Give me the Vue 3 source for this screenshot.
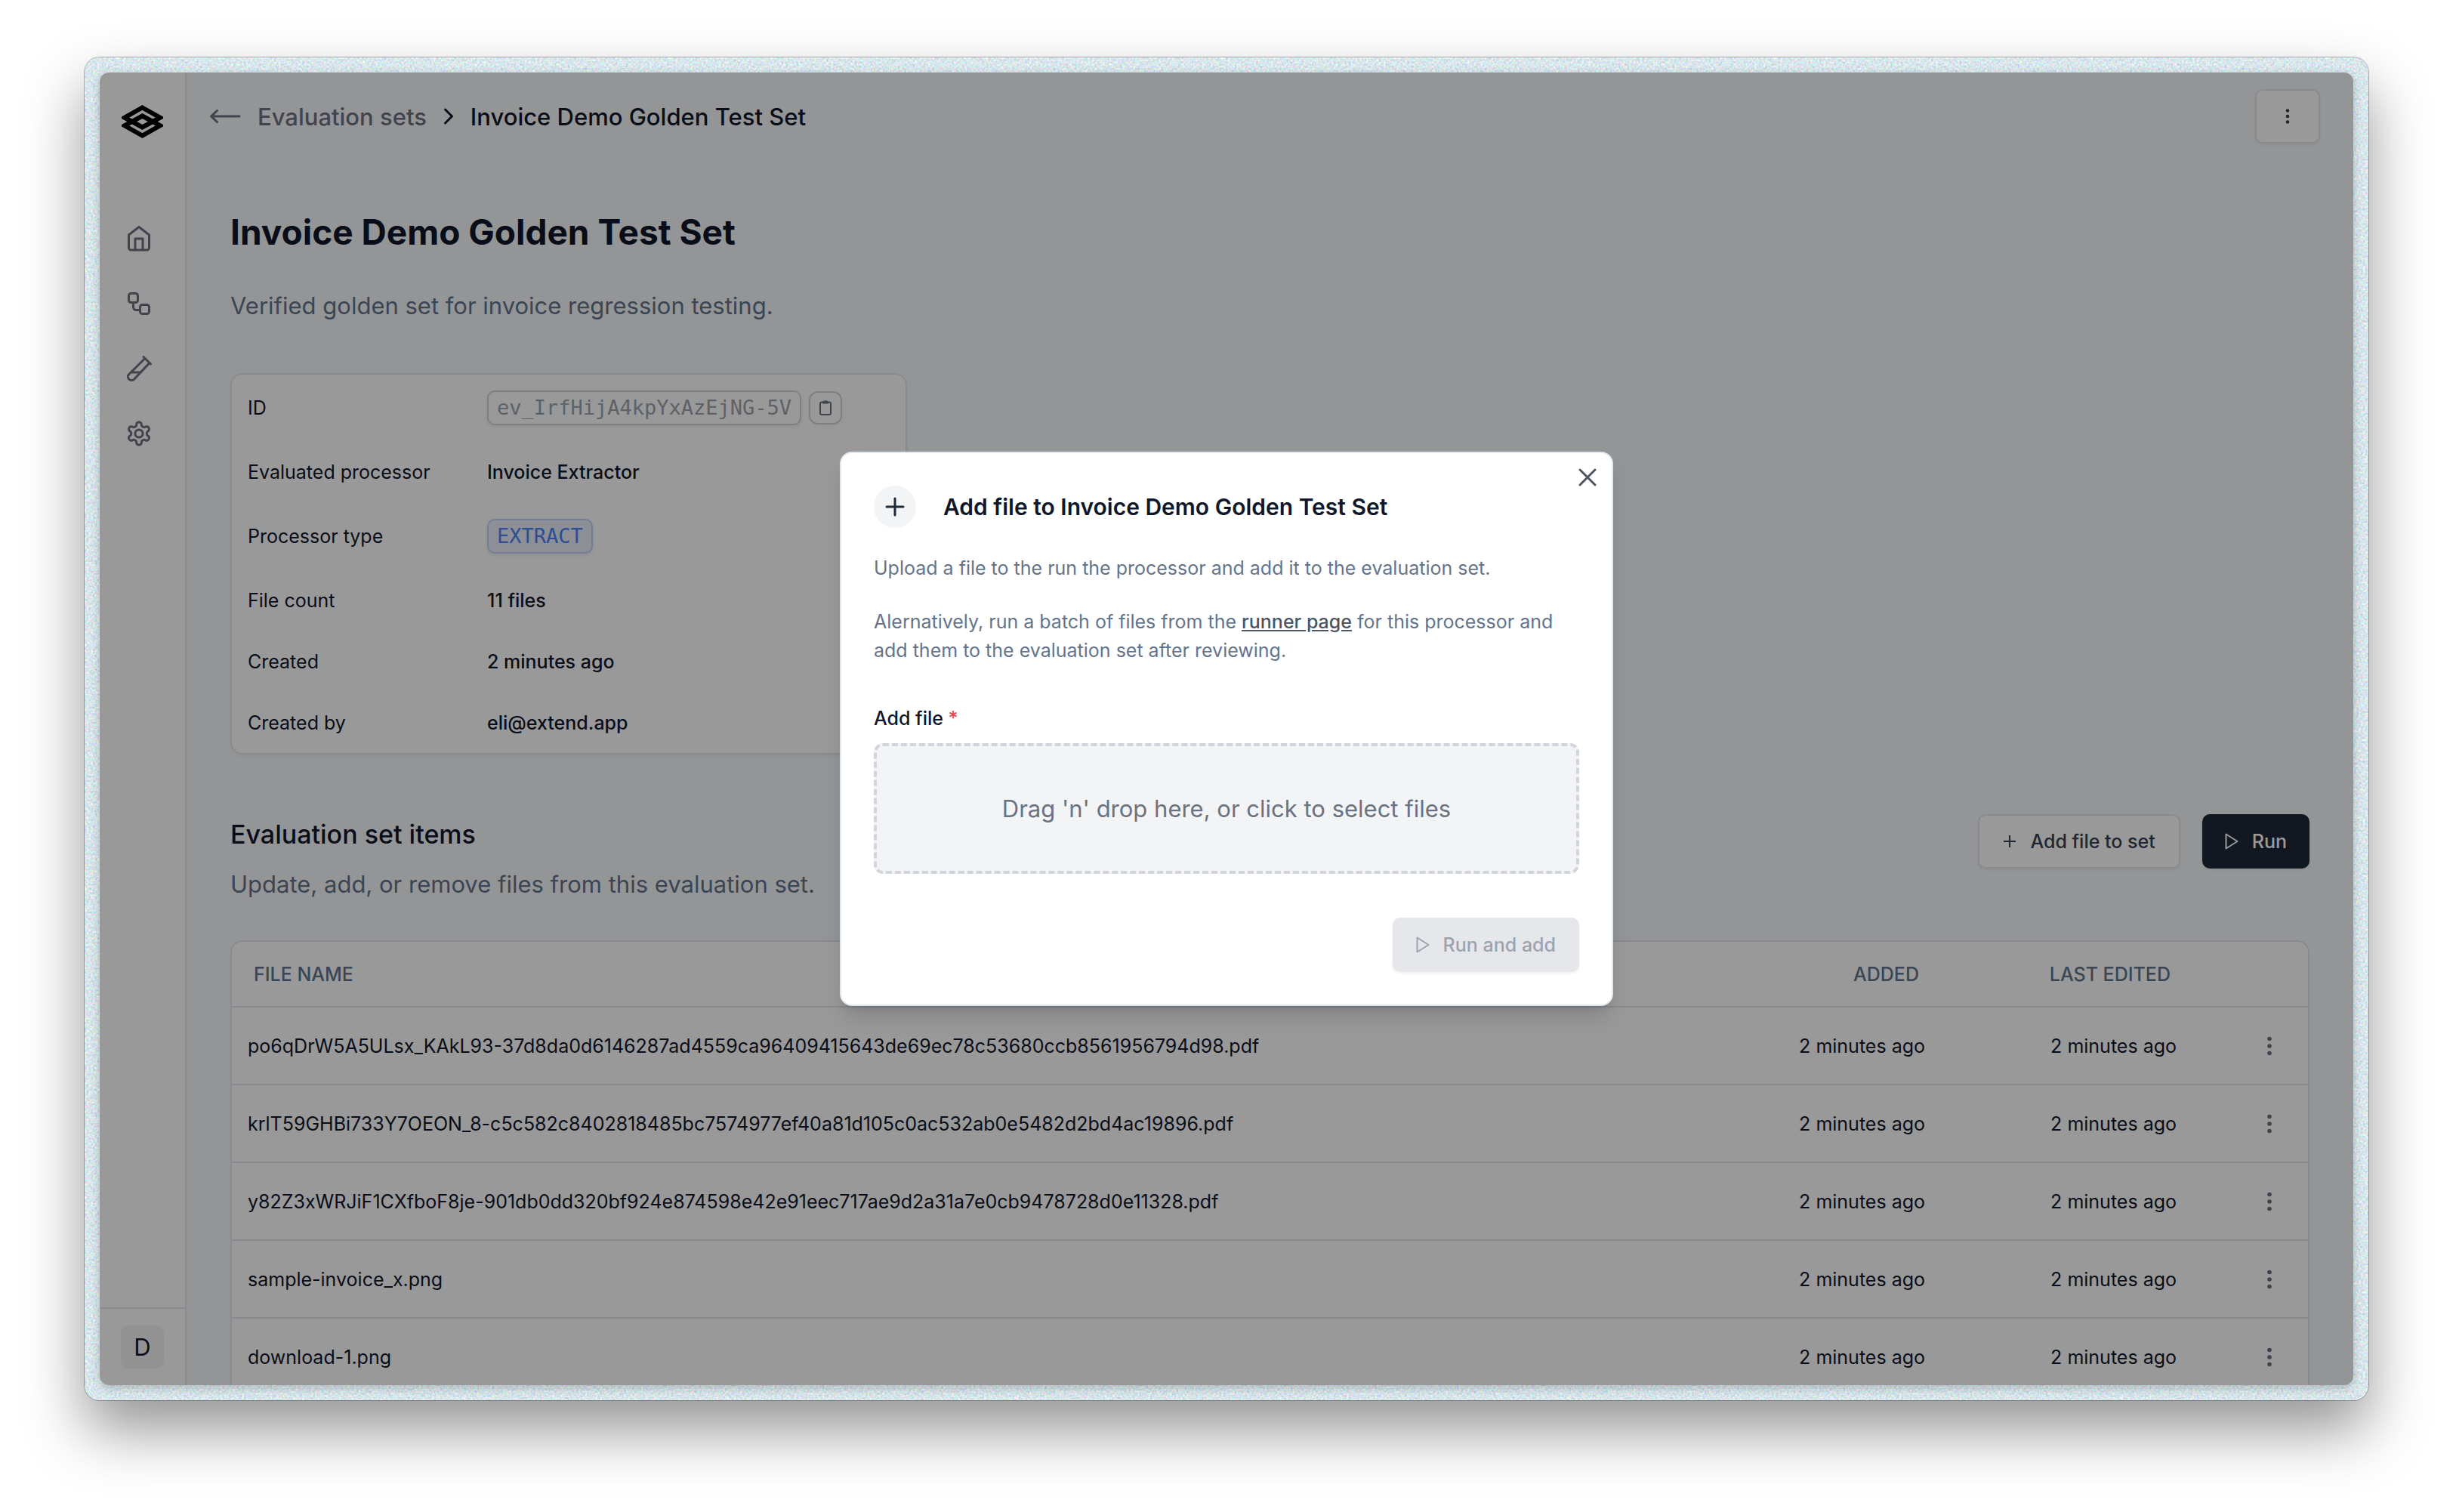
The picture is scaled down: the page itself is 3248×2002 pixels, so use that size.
<script setup>
import { ref } from 'vue'

const title = 'Invoice Demo Golden Test Set'

const details = [
  { label: 'ID', value: 'ev_IrfHijA4kpYxAzEjNG-5V', kind: 'id' },
  { label: 'Evaluated processor', value: 'Invoice Extractor', kind: 'text' },
  { label: 'Processor type', value: 'EXTRACT', kind: 'type' },
  { label: 'File count', value: '11 files', kind: 'text' },
  { label: 'Created', value: '2 minutes ago', kind: 'text' },
  { label: 'Created by', value: 'eli@extend.app', kind: 'text' },
]

const files = ref([
  'po6qDrW5A5ULsx_KAkL93-37d8da0d6146287ad4559ca96409415643de69ec78c53680ccb8561956794d98.pdf',
  'krlT59GHBi733Y7OEON_8-c5c582c8402818485bc7574977ef40a81d105c0ac532ab0e5482d2bd4ac19896.pdf',
  'y82Z3xWRJiF1CXfboF8je-901db0dd320bf924e874598e42e91eec717ae9d2a31a7e0cb9478728d0e11328.pdf',
  'sample-invoice_x.png',
  'download-1.png',
])
</script>

<template>
  <div class="stage">
    <div class="frame">
      <svg class="grain" aria-hidden="true">
        <filter id="grain" x="0" y="0" width="100%" height="100%" color-interpolation-filters="sRGB">
          <feTurbulence type="fractalNoise" baseFrequency="0.35" numOctaves="2" seed="4" />
          <feColorMatrix values="0.5 0 0 0 0.6  0 0.35 0 0 0.73  0 0 0.35 0 0.75  0 0 0 0 1" />
        </filter>
        <rect width="100%" height="100%" filter="url(#grain)" />
      </svg>

      <div class="window">
        <aside class="sidebar">
          <a href="#" class="logo" aria-label="Extend">
            <svg width="55" height="44" viewBox="0 0 55 44" fill="none" stroke="#000" stroke-width="6">
              <path d="M27.5 3.5 51 16.7 27.5 29.5 4 16.7Z" />
              <path d="M27.5 14.5 51 27.3 27.5 40.5 4 27.3Z" />
            </svg>
          </a>
          <nav class="nav" aria-label="Main">
            <a href="#" aria-label="Home">
              <svg width="36" height="36" viewBox="0 0 36 36" class="line">
                <path d="M4.5 13 18 2.5 31.5 13V30a3 3 0 0 1-3 3h-21a3 3 0 0 1-3-3Z" />
                <path d="M13 33V18h10v15" />
              </svg>
            </a>
            <a href="#" aria-label="Workflows">
              <svg width="36" height="36" viewBox="0 0 36 36" class="line">
                <rect x="4.5" y="4.5" width="12" height="12" rx="3" />
                <rect x="19.5" y="19.5" width="12" height="12" rx="3" />
                <path d="M10.5 16.5v6a4 4 0 0 0 4 4h5" />
              </svg>
            </a>
            <a href="#" aria-label="Evaluation">
              <svg width="36" height="36" viewBox="0 0 36 36" class="line">
                <path d="m24 2.5 9.5 9.500M26 4.500 4.800 25.500a4.700 4.700 0 0 0 6.700 6.700L31.800 10.600M7.500 23h13" />
              </svg>
            </a>
            <a href="#" aria-label="Settings">
              <svg width="36" height="36" viewBox="0 0 24 24" class="line gear">
                <path d="M12.22 2h-.44a2 2 0 0 0-2 2v.18a2 2 0 0 1-1 1.73l-.43.25a2 2 0 0 1-2 0l-.15-.08a2 2 0 0 0-2.73.73l-.22.38a2 2 0 0 0 .73 2.73l.15.1a2 2 0 0 1 1 1.72v.51a2 2 0 0 1-1 1.74l-.15.09a2 2 0 0 0-.73 2.73l.22.38a2 2 0 0 0 2.73.73l.15-.08a2 2 0 0 1 2 0l.43.25a2 2 0 0 1 1 1.73V20a2 2 0 0 0 2 2h.44a2 2 0 0 0 2-2v-.18a2 2 0 0 1 1-1.73l.43-.25a2 2 0 0 1 2 0l.15.08a2 2 0 0 0 2.73-.73l.22-.39a2 2 0 0 0-.73-2.73l-.15-.08a2 2 0 0 1-1-1.74v-.5a2 2 0 0 1 1-1.74l.15-.09a2 2 0 0 0 .73-2.73l-.22-.38a2 2 0 0 0-2.73-.73l-.15.08a2 2 0 0 1-2 0l-.43-.25a2 2 0 0 1-1-1.73V4a2 2 0 0 0-2-2z" />
                <circle cx="12" cy="12" r="3.4" />
              </svg>
            </a>
          </nav>
          <div class="account">
            <button type="button" class="avatar">D</button>
          </div>
        </aside>

        <main class="main">
          <header class="topbar">
            <nav class="crumbs" aria-label="Breadcrumb">
              <a href="#" class="crumb-back">
                <svg width="42" height="22" viewBox="0 0 42 22" class="line">
                  <path d="M40 11H3M10.5 3.5 2.5 11l8 7.5" />
                </svg>
                <span>Evaluation sets</span>
              </a>
              <svg width="14" height="24" viewBox="0 0 14 24" class="chevron">
                <path d="m2.5 3 9 9-9 9" />
              </svg>
              <span class="crumb-current">{{ title }}</span>
            </nav>
            <button type="button" class="button light more" aria-label="More options">
              <svg width="6" height="20" viewBox="0 0 6 20" fill="currentColor">
                <circle cx="3" cy="2.5" r="2.3" /><circle cx="3" cy="10" r="2.3" /><circle cx="3" cy="17.5" r="2.3" />
              </svg>
            </button>
          </header>

          <div class="content">
            <h1>{{ title }}</h1>
            <p class="subtitle">Verified golden set for invoice regression testing.</p>

            <dl class="details">
              <template v-for="d in details" :key="d.label">
                <dt>{{ d.label }}</dt>
                <dd v-if="d.kind === 'id'" class="tall">
                  <code class="pill">{{ d.value }}</code>
                  <button type="button" class="copy" aria-label="Copy ID">
                    <svg width="16" height="20" viewBox="0 0 16 20">
                      <rect x="1" y="2.5" width="14" height="16.5" rx="2" />
                      <path d="M5 3.5c0-3 6-3 6 0Z" />
                    </svg>
                  </button>
                </dd>
                <dd v-else-if="d.kind === 'type'" class="tall">
                  <code class="pill blue">{{ d.value }}</code>
                </dd>
                <dd v-else>{{ d.value }}</dd>
              </template>
            </dl>

            <section>
              <div class="section-head">
                <div>
                  <h2>Evaluation set items</h2>
                  <p class="subtitle">Update, add, or remove files from this evaluation set.</p>
                </div>
                <div class="actions">
                  <button type="button" class="button light">
                    <svg width="18" height="18" viewBox="0 0 18 18" class="glyph"><path d="M9 1v16M1 9h16" /></svg>
                    Add file to set
                  </button>
                  <button type="button" class="button dark">
                    <svg width="18" height="22" viewBox="0 0 18 22" class="glyph"><path d="M1.5 1.5v19l15-9.5Z" /></svg>
                    Run
                  </button>
                </div>
              </div>

              <div class="table-card">
                <table>
                  <thead>
                    <tr>
                      <th scope="col">File name</th>
                      <th scope="col" class="when">Added</th>
                      <th scope="col" class="when edited">Last edited</th>
                      <th class="menu"></th>
                    </tr>
                  </thead>
                  <tbody>
                    <tr v-for="f in files" :key="f">
                      <td>{{ f }}</td>
                      <td class="when">2 minutes ago</td>
                      <td class="when edited">2 minutes ago</td>
                      <td class="menu">
                        <button type="button" class="row-menu" aria-label="Row actions">
                          <svg width="6" height="26" viewBox="0 0 6 26" fill="currentColor">
                            <circle cx="3" cy="3.5" r="2.8" /><circle cx="3" cy="13" r="2.8" /><circle cx="3" cy="22.5" r="2.8" />
                          </svg>
                        </button>
                      </td>
                    </tr>
                  </tbody>
                </table>
              </div>
            </section>
          </div>
        </main>

        <div class="overlay">
          <form class="modal" role="dialog" aria-labelledby="dialog-title" @submit.prevent>
            <button type="button" class="close" aria-label="Close">
              <svg width="24" height="24" viewBox="0 0 24 24"><path d="m2 2 20 20M22 2 2 22" /></svg>
            </button>
            <div class="modal-head">
              <span class="badge">
                <svg width="28" height="28" viewBox="0 0 28 28"><path d="M14 3v22M3 14h22" /></svg>
              </span>
              <h3 id="dialog-title">Add file to {{ title }}</h3>
            </div>
            <div class="copy-text">
              <p>Upload a file to the run the processor and add it to the evaluation set.</p>
              <p>
                Alernatively, run a batch of files from the <a href="#">runner page</a> for this
                processor and add them to the evaluation set after reviewing.
              </p>
            </div>
            <label class="field-label" for="file">Add file <span class="required">*</span></label>
            <label class="dropzone" for="file">Drag 'n' drop here, or click to select files</label>
            <input id="file" type="file" class="file-input" />
            <div class="modal-foot">
              <button type="submit" class="button muted" disabled>
                <svg width="18" height="22" viewBox="0 0 18 22" class="glyph"><path d="M1.5 1.5v19l15-9.5Z" /></svg>
                Run and add
              </button>
            </div>
          </form>
        </div>
      </div>
    </div>
  </div>
</template>

<style>
body {
  background: #fff;
}
</style>

<style scoped>
* {
  box-sizing: border-box;
  margin: 0;
}

.stage {
  display: flex;
  height: 100vh;
  padding: 76px 112px 148px;
  overflow: hidden;
  font-family: Inter, "Liberation Sans", sans-serif;
  font-size: 25px;
  color: #0f172a;
}

svg {
  display: block;
  flex: none;
}

button {
  font: inherit;
  color: inherit;
}

a {
  color: inherit;
  text-decoration: none;
}

.frame {
  position: relative;
  display: flex;
  flex: 1;
  min-width: 0;
  padding: 20px;
  border-radius: 20px;
  background: #d9e5e9;
  box-shadow: 0 0 0 1px rgba(0, 0, 0, 0.28), 0 40px 80px rgba(0, 0, 0, 0.42);
}

.grain {
  position: absolute;
  inset: 0;
  width: 100%;
  height: 100%;
  border-radius: 20px;
}

.window {
  position: relative;
  display: flex;
  flex: 1;
  min-width: 0;
  overflow: hidden;
  border-radius: 12px;
  background: #f7f9fb;
  box-shadow: 0 4px 14px rgba(0, 0, 0, 0.22);
}

/* Sidebar */

.sidebar {
  display: flex;
  flex: none;
  flex-direction: column;
  width: 115px;
  border-right: 2px solid #e5e7eb;
  background: #fff;
}

.logo {
  padding: 43px 29px 0;
}

.nav {
  display: flex;
  flex-direction: column;
  gap: 50px;
  padding: 115px 34px 0;
  color: #6f7180;
}

.line {
  fill: none;
  stroke: currentColor;
  stroke-width: 3;
  stroke-linecap: round;
  stroke-linejoin: round;
}

.gear {
  stroke-width: 2;
}

.account {
  display: flex;
  justify-content: center;
  margin-top: auto;
  padding: 22px 0;
  border-top: 2px solid #e5e7eb;
}

.avatar {
  width: 57px;
  height: 57px;
  padding: 0;
  border: 0;
  border-radius: 10px;
  background: #f3f4f6;
  font-size: 31px;
}

/* Page */

.main {
  flex: 1;
  min-width: 0;
}

.topbar {
  display: flex;
  align-items: center;
  justify-content: space-between;
  height: 116px;
  padding: 0 44px 0 30px;
}

.crumbs,
.crumb-back {
  display: flex;
  align-items: center;
}

.crumbs {
  gap: 22px;
  font-size: 31px;
  font-weight: 500;
}

.crumb-back {
  gap: 22px;
  color: #6f7180;
}

.chevron {
  fill: none;
  stroke: currentColor;
  stroke-width: 3;
  stroke-linecap: round;
  stroke-linejoin: round;
}

.content {
  padding: 65px 58px 0;
}

h1 {
  margin-bottom: 46px;
  font-size: 46px;
  font-weight: 700;
  line-height: 60px;
}

.subtitle {
  font-size: 31px;
  line-height: 44px;
  color: #64748b;
}

.details {
  display: grid;
  grid-template-columns: 317px 1fr;
  align-items: center;
  row-gap: 41px;
  width: 896px;
  margin: 67px 0 79px;
  padding: 20px 21px;
  border: 2px solid #e5e7eb;
  border-radius: 16px;
  background: #fff;
  box-shadow: 0 2px 4px rgba(0, 0, 0, 0.05);
  line-height: 40px;
}

dd {
  font-weight: 500;
}

.tall {
  display: flex;
  align-items: center;
  gap: 10px;
  height: 48px;
}

.pill {
  padding: 0 11px;
  border: 2px solid #d1d5db;
  border-radius: 10px;
  box-shadow: 0 2px 4px rgba(0, 0, 0, 0.08);
  font-family: "DejaVu Sans Mono", monospace;
  font-size: 27px;
  font-weight: 400;
  line-height: 42px;
  color: #9ca3af;
}

.pill.blue {
  border-color: #bfd3fe;
  background: #eaf0fa;
  color: #4b82f6;
}

.copy {
  display: grid;
  place-items: center;
  width: 44px;
  height: 44px;
  padding: 0;
  border: 2px solid #d1d5db;
  border-radius: 12px;
  background: #fff;
  box-shadow: 0 2px 4px rgba(0, 0, 0, 0.05);
}

.copy svg {
  fill: none;
  stroke: #6b7280;
  stroke-width: 2;
}

.section-head {
  display: flex;
  align-items: flex-start;
  justify-content: space-between;
  margin-bottom: 52px;
}

h2 {
  margin-bottom: 17px;
  font-size: 34px;
  font-weight: 500;
  line-height: 54px;
}

.actions {
  display: flex;
  gap: 29px;
}

.button {
  display: flex;
  align-items: center;
  justify-content: center;
  gap: 18px;
  height: 72px;
  padding: 0 28px;
  border: 2px solid transparent;
  border-radius: 10px;
  box-shadow: 0 2px 4px rgba(0, 0, 0, 0.06);
  font-weight: 500;
}

.button.light {
  padding: 0 31px;
  border-color: #e5e7eb;
  background: #fff;
  color: #374151;
}

.button.dark {
  background: #1f2937;
  color: #fff;
}

.button.muted {
  padding: 0 29px;
  background: #e5e7eb;
  color: #9ca3af;
}

.button.more {
  width: 86px;
  padding: 0;
}

.glyph {
  fill: none;
  stroke: currentColor;
  stroke-width: 2;
  stroke-linejoin: round;
}

.table-card {
  border: 2px solid #e5e7eb;
  border-radius: 16px;
  background: #fff;
}

table {
  width: 100%;
  border-spacing: 0;
}

th,
td {
  padding: 0 21px;
  border-bottom: 2px solid #e2e8f0;
  text-align: left;
  white-space: nowrap;
}

th {
  height: 87px;
  padding: 0 29px;
  font-weight: 500;
  color: #64748b;
  text-transform: uppercase;
}

td {
  height: 103px;
}

.when {
  width: 280px;
  text-align: right;
}

.edited {
  width: 333px;
}

.menu {
  width: 153px;
  padding: 0 48px;
}

.row-menu {
  display: block;
  margin-left: auto;
  padding: 0;
  border: 0;
  background: none;
  color: #6b7280;
}

/* Dialog */

.overlay {
  position: absolute;
  inset: 0;
  display: flex;
  align-items: center;
  justify-content: center;
  background: rgba(0, 0, 0, 0.4);
}

.modal {
  position: relative;
  width: 1024px;
  padding: 43px;
  border: 2px solid #e2e8f0;
  border-radius: 16px;
  background: #fff;
  box-shadow: 0 20px 30px -6px rgba(0, 0, 0, 0.14), 0 8px 12px -8px rgba(0, 0, 0, 0.14);
}

.close {
  position: absolute;
  top: 20px;
  right: 20px;
  padding: 0;
  border: 0;
  background: none;
  color: #4b5563;
}

.close svg,
.badge svg {
  fill: none;
  stroke: currentColor;
  stroke-width: 3;
  stroke-linecap: round;
}

.modal-head {
  display: flex;
  align-items: center;
  gap: 36px;
}

.badge {
  display: grid;
  place-items: center;
  width: 56px;
  height: 56px;
  border-radius: 50%;
  background: #f3f4f6;
  color: #1f2937;
}

h3 {
  font-size: 30px;
  font-weight: 600;
}

.copy-text {
  display: grid;
  gap: 33px;
  margin: 34px 0 54px;
  line-height: 38px;
  color: #64748b;
}

.copy-text a {
  font-weight: 500;
  color: #4b5563;
  text-decoration: underline;
}

.field-label {
  display: block;
  margin-bottom: 16px;
  font-weight: 500;
  line-height: 34px;
}

.required {
  color: #ef4444;
}

.dropzone {
  display: grid;
  place-items: center;
  height: 173px;
  border: 4px dashed #d1d5db;
  border-radius: 12px;
  background: #f3f4f6;
  font-size: 31px;
  color: #6b7280;
}

.file-input {
  position: absolute;
  width: 1px;
  height: 1px;
  overflow: hidden;
  opacity: 0;
}

.modal-foot {
  display: flex;
  justify-content: flex-end;
  margin-top: 58px;
}
</style>
